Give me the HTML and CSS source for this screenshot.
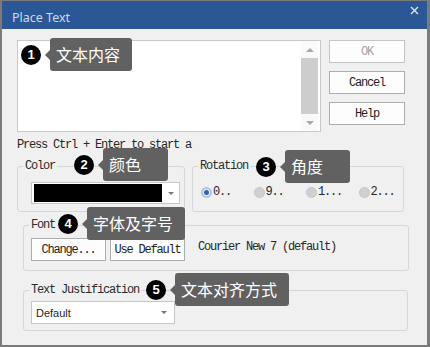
FILE: index.html
```html
<!DOCTYPE html>
<html lang="en">
<head>
<meta charset="utf-8">
<title>Place Text</title>
<link rel="stylesheet" href="styles.css">
</head>
<body>
<div class="window">
  <div class="titlebar">
    <span class="title">Place Text</span>
    <svg class="close" viewBox="0 0 9 9" width="9" height="9"><path d="M1 1L8 8M8 1L1 8" stroke="#dfe6f2" stroke-width="1.4" fill="none"/></svg>
  </div>
  <div class="body">
    <div class="top-row">
      <div class="textbox">
        <div class="scrollbar">
          <div class="sb-btn"><span class="sb-up"></span></div>
          <div class="sb-thumb"></div>
          <div class="sb-btn"><span class="sb-down"></span></div>
        </div>
      </div>
      <div class="buttons">
        <button class="btn btn-disabled">OK</button>
        <button class="btn">Cancel</button>
        <button class="btn">Help</button>
      </div>
    </div>
    <p class="hint">Press Ctrl + Enter to start a</p>
    <div class="group-row">
      <fieldset class="group group-color">
        <legend>Color</legend>
        <div class="color-body">
          <div class="select select-color"><span class="swatch"></span><span class="caret"></span></div>
        </div>
      </fieldset>
      <fieldset class="group group-rotation">
        <legend>Rotation</legend>
        <div class="radios">
          <div class="radio-item"><span class="radio checked"><span class="dot"></span></span><span>0..</span></div>
          <div class="radio-item"><span class="radio"></span><span>9..</span></div>
          <div class="radio-item"><span class="radio"></span><span>1...</span></div>
          <div class="radio-item"><span class="radio"></span><span>2...</span></div>
        </div>
      </fieldset>
    </div>
    <fieldset class="group group-font">
      <legend>Font</legend>
      <div class="font-body">
        <button class="btn btn-small">Change...</button>
        <button class="btn btn-small">Use Default</button>
        <span class="font-name">Courier New 7 (default)</span>
      </div>
    </fieldset>
    <fieldset class="group group-just">
      <legend>Text Justification</legend>
      <div class="just-body">
        <div class="select select-just"><span>Default</span><span class="caret"></span></div>
      </div>
    </fieldset>
  </div>

  <div class="note n1"><span class="badge">1</span><span class="tip">文本内容</span></div>
  <div class="note n2"><span class="badge">2</span><span class="tip">颜色</span></div>
  <div class="note n3"><span class="badge">3</span><span class="tip">角度</span></div>
  <div class="note n4"><span class="badge">4</span><span class="tip">字体及字号</span></div>
  <div class="note n5"><span class="badge">5</span><span class="tip">文本对齐方式</span></div>
</div>
</body>
</html>
```

FILE: styles.css
```css
* { box-sizing: border-box; }
html, body { margin: 0; padding: 0; }
body { width: 430px; height: 347px; overflow: hidden; background: #f0f0f0; }

.window {
  position: relative;
  width: 430px;
  height: 347px;
  border-style: solid;
  border-color: #7b7b7b;
  border-width: 1px 3px 2px 2px;
  background: #f0f0f0;
  font-family: "Liberation Mono", monospace;
  font-size: 12px;
  letter-spacing: -1.2px;
  color: #262626;
}

.titlebar {
  height: 28px;
  background: #2b5797;
  display: flex;
  justify-content: space-between;
  align-items: flex-start;
  padding: 0 8px 0 10px;
}
.title {
  font-family: "Noto Sans", sans-serif;
  font-size: 12.5px;
  letter-spacing: 0;
  line-height: 16px;
  margin-top: 9px;
  color: #cdd9ec;
}
.close { display: block; margin-top: 5px; }

.body { padding: 11px 0 0 15px; }

.top-row { display: flex; align-items: flex-start; }
.textbox {
  width: 304px;
  height: 92px;
  border: 1px solid #c9c9c9;
  background: #fff;
  display: flex;
  justify-content: flex-end;
  padding-right: 2px;
}
.scrollbar { width: 17px; display: flex; flex-direction: column; background: #fafafa; }
.sb-btn { height: 17px; display: flex; align-items: center; justify-content: center; }
.sb-up { border-left: 4px solid transparent; border-right: 4px solid transparent; border-bottom: 4px solid #a8a8a8; }
.sb-down { border-left: 4px solid transparent; border-right: 4px solid transparent; border-top: 4px solid #a8a8a8; }
.sb-thumb { flex: 1; background: #cdcdcd; }

.buttons { display: flex; flex-direction: column; gap: 8px; margin-left: 8px; }
.btn {
  width: 76px;
  height: 23px;
  border: 1px solid #adadad;
  background: #fdfdfd;
  font: inherit;
  letter-spacing: inherit;
  line-height: 14px;
  color: #1e1e1e;
  padding: 0;
  margin: 0;
  display: flex;
  align-items: center;
  justify-content: center;
}
.btn-disabled { color: #a3a3a3; border-color: #c4c4c4; }
.btn-small { width: 75px; }

.hint { margin: 6px 0 0 0; line-height: 14px; }

.group-row { display: flex; gap: 7px; margin-top: 8px; }
.group {
  margin: 0;
  padding: 0;
  border: 1px solid #d6d6d6;
  border-radius: 3px;
  min-width: 0;
}
.group legend { padding: 0 2px; margin-left: 5px; line-height: 13px; color: #2a2a2a; }
.group-color { width: 168px; }
.group-rotation { width: 212px; }

.color-body { padding: 9px 0 7px 13px; }
.select {
  display: flex;
  align-items: center;
  justify-content: space-between;
  background: #fff;
  border: 1px solid #c6c6c6;
}
.select-color { width: 149px; height: 22px; padding: 0 5px 0 2px; }
.swatch { width: 128px; height: 18px; background: #000; }
.caret { width: 0; height: 0; border-left: 3px solid transparent; border-right: 3px solid transparent; border-top: 3px solid #777; }

.radios {
  display: grid;
  grid-template-columns: repeat(4, 52.5px);
  align-items: center;
  padding: 12px 0 0 8px;
  line-height: 14px;
}
.radio-item { display: flex; align-items: center; gap: 1px; }
.radio {
  width: 11px;
  height: 11px;
  border-radius: 50%;
  background: #d0d0d0;
  border: 1px solid #c6c6c6;
}
.radio.checked {
  background: #e8eef7;
  border: 2px solid #b5c4db;
  display: flex;
  align-items: center;
  justify-content: center;
}
.dot { width: 5px; height: 5px; border-radius: 50%; background: #2b63b5; }

.group-font { width: 386px; margin: 7px 0 0 6px; }
.font-body { display: flex; align-items: flex-start; gap: 4px; padding: 6px 0 9px 7px; }
.font-name { margin: 2px 0 0 9px; line-height: 14px; }

.group-just { width: 385px; margin: 13px 0 0 6px; }
.just-body { padding: 4px 0 6px 7px; }
.select-just {
  width: 144px;
  height: 23px;
  padding: 0 7px 0 4px;
  font-family: "Liberation Sans", sans-serif;
  font-size: 11px;
  letter-spacing: 0;
  color: #1e1e1e;
}

.note { position: absolute; display: flex; align-items: center; height: 33px; }
.badge {
  width: 20px;
  height: 20px;
  border-radius: 50%;
  background: #000;
  color: #fff;
  font-family: "Liberation Sans", sans-serif;
  font-weight: bold;
  font-size: 13px;
  letter-spacing: 0;
  display: flex;
  align-items: center;
  justify-content: center;
}
.tip {
  position: relative;
  margin-left: 9px;
  height: 33px;
  min-width: 65px;
  padding: 0 12px 0 6px;
  background: #616161;
  color: #fff;
  border-radius: 3px;
  font-family: "Noto Sans CJK SC", sans-serif;
  font-size: 16px;
  line-height: 33px;
  letter-spacing: 0;
  white-space: nowrap;
}
.tip::before {
  content: "";
  position: absolute;
  left: -5px;
  top: 50%;
  margin-top: -5px;
  border-style: solid;
  border-width: 5px 5px 5px 0;
  border-color: transparent #616161 transparent transparent;
}
.n1 { left: 19px; top: 37px; }
.n2 { left: 72px; top: 147px; }
.n3 { left: 254px; top: 149px; }
.n4 { left: 56px; top: 206px; }
.n5 { left: 144px; top: 272px; }
```
